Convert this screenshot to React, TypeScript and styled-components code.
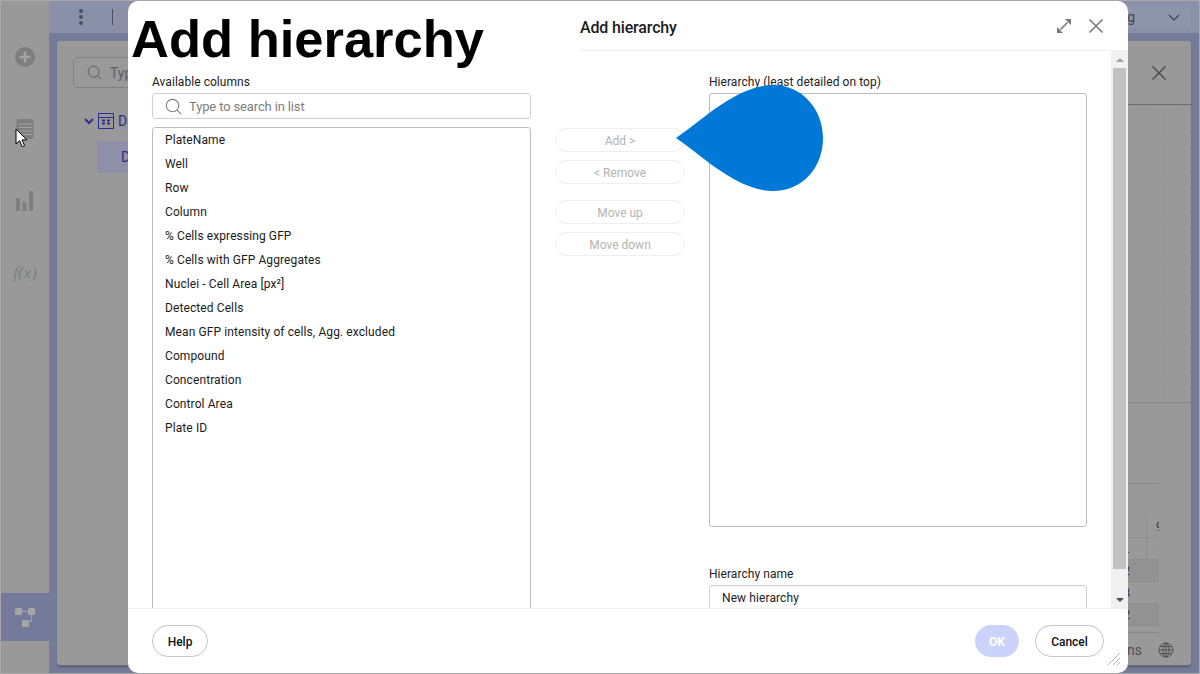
import React from 'react'
import styled, { createGlobalStyle } from 'styled-components'

const GlobalStyle = createGlobalStyle`
  html, body {
    margin: 0;
    padding: 0;
    width: 1200px;
    height: 674px;
    overflow: hidden;
    font-family: Roboto, "Liberation Sans", sans-serif;
  }
`

const Page = styled.div`
  position: relative;
  width: 1200px;
  height: 674px;
  display: flex;
  overflow: hidden;
  background: #747c99;
  box-sizing: border-box;
  border: 1px solid #a8a8a8;
`

const Rail = styled.div`
  width: 48px;
  padding-top: 20px;
  background: #999;
  display: flex;
  flex-direction: column;
  flex-shrink: 0;
  box-sizing: border-box;
`

const RailIcon = styled.div`
  height: 72px;
  display: flex;
  align-items: center;
  justify-content: center;
`

const RailActive = styled.div`
  margin-top: auto;
  margin-bottom: 32px;
  height: 48px;
  background: #75799b;
  display: flex;
  align-items: center;
  justify-content: center;
`

const Formula = styled.span`
  font-family: "Liberation Serif", serif;
  font-style: italic;
  font-size: 17px;
  color: #7e7e7e;
`

const Backdrop = styled.div`
  flex: 1;
  display: flex;
  flex-direction: column;
  min-width: 0;
`

const TopBar = styled.div`
  height: 32px;
  margin-bottom: 8px;
  background: #8a90a8;
  display: flex;
  align-items: center;
  padding: 0 9px 0 30px;
  gap: 29px;
  flex-shrink: 0;
`

const Dots = styled.div`
  display: flex;
  flex-direction: column;
  gap: 2px;
  span {
    width: 4px;
    height: 4px;
    border-radius: 50%;
    background: #4a4e62;
  }
`

const Divider = styled.div`
  width: 1px;
  height: 16px;
  background: #4a4e62;
`

const TopDropdown = styled.div`
  margin-left: auto;
  width: 100px;
  height: 21px;
  background: #8f95a8;
  border-radius: 3px;
  display: flex;
  align-items: center;
  padding-right: 10px;
  box-sizing: border-box;
  font-size: 14px;
  color: #42465a;
  span {
    margin-left: auto;
    margin-right: 33px;
  }
`

const Panel = styled.div`
  width: 1134px;
  height: 624px;
  margin-left: 8px;
  background: #999;
  border-radius: 3px;
  box-shadow: 0 3px 2px #62677d;
  display: flex;
  justify-content: space-between;
`

const LeftPane = styled.div`
  padding: 16px 0 0 16px;
  display: flex;
  flex-direction: column;
`

const BackSearch = styled.div`
  width: 300px;
  height: 31px;
  box-sizing: border-box;
  border: 1px solid #808080;
  border-radius: 5px;
  display: flex;
  align-items: center;
  padding-left: 13px;
  gap: 8px;
  font-size: 14px;
  color: #5e5e5e;
`

const BackTreeRow = styled.div`
  margin: 25px 0 0 11px;
  display: flex;
  align-items: center;
  gap: 4px;
  font-size: 14px;
  color: #2b2f8a;
`

const BackChip = styled.div`
  width: 200px;
  height: 32px;
  margin: 12px 0 0 24px;
  border-radius: 3px;
  background: #8d90a8;
  font-size: 14px;
  color: #2b2f8a;
  display: flex;
  align-items: center;
  padding-left: 24px;
  box-sizing: border-box;
`

const RightPane = styled.div`
  width: 63px;
  display: flex;
  flex-direction: column;
`

const BackHead = styled.div`
  height: 64px;
  box-sizing: border-box;
  border-bottom: 1px solid #6e6e6e;
  display: flex;
  align-items: center;
  justify-content: flex-end;
  padding: 0 25px 0 0;
  flex-shrink: 0;
`

const BackCanvas = styled.div`
  height: 298px;
  box-sizing: border-box;
  border-bottom: 1px solid #858585;
  background-image: radial-gradient(#8f8f8f 0.7px, transparent 0.9px);
  background-size: 10px 10px;
  background-position: 1px 5px;
  flex-shrink: 0;
`

const BackGrid = styled.div`
  width: 31px;
  margin-top: 80px;
  padding-top: 32px;
  border-top: 1px solid #888;
  display: flex;
  flex-direction: column;
  border-bottom: 1px solid #888;
  padding-bottom: 6px;
`

const BackGridRow = styled.div<{ $shade?: boolean; $split?: boolean }>`
  height: 22px;
  box-sizing: border-box;
  display: flex;
  align-items: center;
  justify-content: space-between;
  background: ${p => (p.$shade ? '#929292' : 'transparent')};
  border-bottom: 1px solid #8c8c8c;
  font-size: 12px;
  color: #333;
  background-image: ${p =>
    p.$split ? 'linear-gradient(#8c8c8c, #8c8c8c)' : 'none'};
  background-size: 1px 100%;
  background-position: 18px 0;
  background-repeat: no-repeat;
`

const ClippedEnd = styled.span<{ $color?: string }>`
  width: 2px;
  display: flex;
  justify-content: flex-end;
  white-space: nowrap;
  color: ${p => p.$color ?? '#333'};
`

const ClippedStart = styled.span`
  width: 3px;
  overflow: hidden;
  color: #333;
`

const BackFooter = styled.div`
  margin-top: auto;
  height: 26px;
  margin-bottom: 2px;
  display: flex;
  align-items: center;
  justify-content: flex-end;
  gap: 16px;
  padding-right: 17px;
  font-size: 14px;
  color: #505050;
  svg {
    flex-shrink: 0;
  }
`

const FooterText = styled.span`
  white-space: nowrap;
  flex-shrink: 0;
`

const Dialog = styled.div`
  position: absolute;
  left: 127px;
  top: 0;
  width: 1000px;
  height: 672px;
  background: #fff;
  border-radius: 10px;
  display: flex;
  flex-direction: column;
  overflow: hidden;
  color: #000;
`

const Header = styled.div`
  height: 50px;
  box-sizing: border-box;
  margin-left: 452px;
  display: flex;
  align-items: center;
  justify-content: space-between;
  padding: 0 25px 0 0;
  border-bottom: 1px solid #f0f0f6;
  flex-shrink: 0;
`

const Title = styled.div`
  margin-top: 4px;
  font-size: 16px;
  font-weight: 500;
  letter-spacing: -0.15px;
  color: #1c1c1c;
`

const HeaderIcons = styled.div`
  display: flex;
  align-items: center;
  gap: 18px;
`

const BigHeading = styled.div`
  position: absolute;
  left: 3px;
  top: 8px;
  font-family: "Liberation Sans", Arial, sans-serif;
  font-weight: 700;
  font-size: 52.5px;
  line-height: 60px;
  color: #000;
`

const Body = styled.div`
  flex: 1;
  display: flex;
  min-height: 0;
  position: relative;
`

const Content = styled.div`
  flex: 1;
  display: grid;
  grid-template-columns: 379px 178px 378px;
  padding: 22px 0 0 24px;
  overflow: hidden;
`

const Column = styled.div`
  display: flex;
  flex-direction: column;
  min-height: 0;
  > * {
    flex-shrink: 0;
  }
`

const Label = styled.div`
  font-size: 12px;
  letter-spacing: 0.05px;
  line-height: 18px;
  height: 20px;
  color: #222;
`

const SearchBox = styled.div`
  height: 26px;
  box-sizing: border-box;
  border: 1px solid #cfcfde;
  border-radius: 3px;
  display: flex;
  align-items: center;
  padding-left: 12px;
  gap: 7px;
  font-size: 13px;
  letter-spacing: -0.14px;
  color: #7d7d7d;
`

const ColumnList = styled.div`
  margin-top: 8px;
  height: 490px;
  box-sizing: border-box;
  border: 1px solid #bdbdbd;
  border-radius: 3px;
`

const ListItem = styled.div`
  height: 24px;
  line-height: 24px;
  padding-left: 12px;
  font-size: 12px;
  letter-spacing: 0.1px;
  color: #1a1a1a;
`

const Actions = styled.div`
  display: flex;
  flex-direction: column;
  padding: 55px 0 0 24px;
`

const ActionButton = styled.div<{ $gap?: number }>`
  width: 130px;
  height: 24px;
  box-sizing: border-box;
  margin-bottom: ${p => p.$gap ?? 8}px;
  padding-top: 2px;
  border: 1px solid #eeeef3;
  border-radius: 12px;
  display: flex;
  align-items: center;
  justify-content: center;
  font-size: 12px;
  color: #b3b3b3;
`

const HierarchyBox = styled.div`
  height: 434px;
  box-sizing: border-box;
  border: 1px solid #bdbdbd;
  border-radius: 3px;
`

const NameLabel = styled(Label)`
  margin-top: 38px;
`

const NameInput = styled.div`
  height: 26px;
  box-sizing: border-box;
  border: 1px solid #cfcfde;
  border-radius: 3px;
  padding-left: 12px;
  font-size: 12px;
  letter-spacing: 0.1px;
  line-height: 24px;
  color: #222;
`

const Scrollbar = styled.div`
  width: 17px;
  padding: 0 2px;
  box-sizing: border-box;
  background: #f1f1f1;
  display: flex;
  flex-direction: column;
  flex-shrink: 0;
  align-items: center;
`

const ScrollArrow = styled.div<{ $down?: boolean }>`
  height: 17px;
  width: 100%;
  display: flex;
  align-items: center;
  justify-content: center;
  flex-shrink: 0;
  &::before {
    content: '';
    border-left: 4px solid transparent;
    border-right: 4px solid transparent;
    ${p => (p.$down ? 'border-top: 4px solid #505050;' : 'border-bottom: 4px solid #a3a3a3;')}
  }
`

const ScrollThumb = styled.div`
  width: 13px;
  height: 501px;
  background: #c1c1c1;
  flex-shrink: 0;
`

const ScrollSpace = styled.div`
  flex: 1;
`

const Footer = styled.div`
  height: 65px;
  box-sizing: border-box;
  flex-shrink: 0;
  border-top: 1px solid #f0f0f6;
  display: flex;
  align-items: center;
  justify-content: space-between;
  padding: 0 24px;
  position: relative;
`

const FooterRight = styled.div`
  display: flex;
  gap: 16px;
`

const PillButton = styled.div<{ $width: number; $primary?: boolean }>`
  width: ${p => p.$width}px;
  height: 32px;
  box-sizing: border-box;
  padding-top: 2px;
  border-radius: 16px;
  border: ${p => (p.$primary ? 'none' : '1px solid #c4c4c4')};
  background: ${p => (p.$primary ? '#ccd3fb' : '#fff')};
  color: ${p => (p.$primary ? '#fff' : '#111')};
  display: flex;
  align-items: center;
  justify-content: center;
  font-size: 12px;
  font-weight: ${p => (p.$primary ? 700 : 500)};
`

const Grip = styled.svg`
  position: absolute;
  right: 7px;
  bottom: 7px;
`

const Drop = styled.svg`
  position: absolute;
  left: 547px;
  top: 84px;
`

const Cursor = styled.svg`
  position: absolute;
  left: 14px;
  top: 127px;
`

const columns = [
  'PlateName',
  'Well',
  'Row',
  'Column',
  '% Cells expressing GFP',
  '% Cells with GFP Aggregates',
  'Nuclei - Cell Area [px²]',
  'Detected Cells',
  'Mean GFP intensity of cells, Agg. excluded',
  'Compound',
  'Concentration',
  'Control Area',
  'Plate ID',
]

const SearchIcon = ({ color, size }: { color: string; size: number }) => (
  <svg width={size} height={size} viewBox="0 0 18 18" fill="none" stroke={color} strokeWidth="1.2">
    <circle cx="8" cy="8" r="6.6" />
    <path d="M12.8 12.8 17 17" />
  </svg>
)

const CloseIcon = ({ color, size }: { color: string; size: number }) => (
  <svg width={size} height={size} viewBox="0 0 14 14" fill="none" stroke={color} strokeWidth="1.5">
    <path d="M0.5 0.5 13.5 13.5M13.5 0.5 0.5 13.5" />
  </svg>
)

export default function App() {
  return (
    <Page>
      <GlobalStyle />
      <Rail>
        <RailIcon>
          <svg width="20" height="20" viewBox="0 0 20 20">
            <circle cx="10" cy="10" r="10" fill="#7e7e7e" />
            <path d="M10 4.5v11M4.5 10h11" stroke="#a3a3a3" strokeWidth="2.4" />
          </svg>
        </RailIcon>
        <RailIcon>
          <svg width="18" height="20" viewBox="0 0 18 20">
            <rect x="0.5" y="0" width="17" height="20" rx="2" fill="#7e7e7e" />
            <path d="M3 5h13M3 8.5h13M3 12h13M3 15.5h13" stroke="#a3a3a3" strokeWidth="1" />
          </svg>
        </RailIcon>
        <RailIcon>
          <svg width="18" height="20" viewBox="0 0 18 20" fill="#7e7e7e">
            <rect x="0" y="7" width="4" height="13" />
            <rect x="6.5" y="11" width="4" height="9" />
            <rect x="13" y="0" width="4" height="20" />
          </svg>
        </RailIcon>
        <RailIcon>
          <Formula>f(x)</Formula>
        </RailIcon>
        <RailActive>
          <svg width="20" height="20" viewBox="0 0 20 20">
            <rect x="0" y="1" width="7" height="7" rx="1" fill="#a5a5a5" />
            <rect x="13" y="1" width="7" height="7" rx="1" fill="#a5a5a5" />
            <rect x="7" y="13" width="7" height="7" rx="1" fill="#a5a5a5" />
            <path d="M7 4.5h6M16.5 8v6.5H14" stroke="#a5a5a5" fill="none" />
          </svg>
        </RailActive>
      </Rail>
      <Backdrop>
        <TopBar>
          <Dots>
            <span />
            <span />
            <span />
          </Dots>
          <Divider />
          <TopDropdown>
            <span>ng</span>
            <svg width="12" height="7" viewBox="0 0 12 7" fill="none" stroke="#42465a" strokeWidth="1.4">
              <path d="M1 1l5 5 5-5" />
            </svg>
          </TopDropdown>
        </TopBar>
        <Panel>
          <LeftPane>
            <BackSearch>
              <SearchIcon color="#5e5e5e" size={15} />
              Type
            </BackSearch>
            <BackTreeRow>
              <svg width="10" height="7" viewBox="0 0 10 7" fill="none" stroke="#2b2f8a" strokeWidth="2">
                <path d="M1 1l4 4 4-4" />
              </svg>
              <svg width="16" height="16" viewBox="0 0 16 16" fill="none" stroke="#2b2f8a">
                <rect x="0.5" y="0.5" width="15" height="15" />
                <path d="M0.5 4.5h15" />
                <path d="M4 7.5h3M9 7.5h3M4 10.5h3M9 10.5h3" strokeWidth="2" />
              </svg>
              Data
            </BackTreeRow>
            <BackChip>Data</BackChip>
          </LeftPane>
          <RightPane>
            <BackHead>
              <CloseIcon color="#4c4c4c" size={14} />
            </BackHead>
            <BackCanvas />
            <BackGrid>
              <BackGridRow $split>
                <ClippedEnd $color="#5fb0c4">1</ClippedEnd>
                <ClippedStart>9</ClippedStart>
              </BackGridRow>
              <BackGridRow $split>
                <ClippedEnd>.</ClippedEnd>
              </BackGridRow>
              <BackGridRow $shade>
                <ClippedEnd>2</ClippedEnd>
              </BackGridRow>
              <BackGridRow>
                <ClippedEnd>8</ClippedEnd>
              </BackGridRow>
              <BackGridRow $shade>
                <ClippedEnd>2</ClippedEnd>
              </BackGridRow>
            </BackGrid>
            <BackFooter>
              <FooterText>Columns</FooterText>
              <svg width="16" height="16" viewBox="0 0 16 16" fill="none" stroke="#4c4c4c" strokeWidth="0.9">
                <circle cx="8" cy="8" r="7" />
                <ellipse cx="8" cy="8" rx="3" ry="7" />
                <path d="M1 8h14M2 4.5h12M2 11.5h12M8 1v14" />
              </svg>
            </BackFooter>
          </RightPane>
        </Panel>
      </Backdrop>

      <Cursor width="13" height="20" viewBox="0 0 13 20">
        <path d="M1 1v15l3.6-3.3 2.6 6 2.4-1-2.6-5.8h4.8z" fill="#fff" stroke="#000" strokeWidth="1" />
      </Cursor>

      <Dialog>
        <BigHeading>Add hierarchy</BigHeading>
        <Header>
          <Title>Add hierarchy</Title>
          <HeaderIcons>
            <svg width="14" height="14" viewBox="0 0 14 14" fill="#77777f" stroke="#77777f">
              <path d="M3.5 10.5l7-7" strokeWidth="1.6" />
              <path d="M8 0h6v6zM0 8v6h6z" stroke="none" />
            </svg>
            <CloseIcon color="#77777f" size={14} />
          </HeaderIcons>
        </Header>
        <Body>
          <Content>
            <Column>
              <Label>Available columns</Label>
              <SearchBox>
                <SearchIcon color="#808080" size={17} />
                Type to search in list
              </SearchBox>
              <ColumnList>
                {columns.map(c => (
                  <ListItem key={c}>{c}</ListItem>
                ))}
              </ColumnList>
            </Column>
            <Actions>
              <ActionButton>Add &gt;</ActionButton>
              <ActionButton $gap={16}>&lt; Remove</ActionButton>
              <ActionButton>Move up</ActionButton>
              <ActionButton>Move down</ActionButton>
            </Actions>
            <Column>
              <Label>Hierarchy (least detailed on top)</Label>
              <HierarchyBox />
              <NameLabel>Hierarchy name</NameLabel>
              <NameInput>New hierarchy</NameInput>
            </Column>
          </Content>
          <Scrollbar>
            <ScrollArrow />
            <ScrollThumb />
            <ScrollSpace />
            <ScrollArrow $down />
          </Scrollbar>
        </Body>
        <Footer>
          <PillButton $width={56}>Help</PillButton>
          <FooterRight>
            <PillButton $width={44} $primary>OK</PillButton>
            <PillButton $width={69}>Cancel</PillButton>
          </FooterRight>
          <Grip width="14" height="14" viewBox="0 0 14 14" stroke="#b5b5b5" fill="none">
            <path d="M1 13 13 1M6 13l7-7M10 13l3-3" />
          </Grip>
        </Footer>
        <Drop width="150" height="108" viewBox="0 0 150 108">
          <path d="M1 53 C25 37 62 0 98 0 C127 0 148 24 148 53 C148 83 127 106 98 106 C62 106 25 69 1 53 Z" fill="#0078d7" />
        </Drop>
      </Dialog>
    </Page>
  )
}
